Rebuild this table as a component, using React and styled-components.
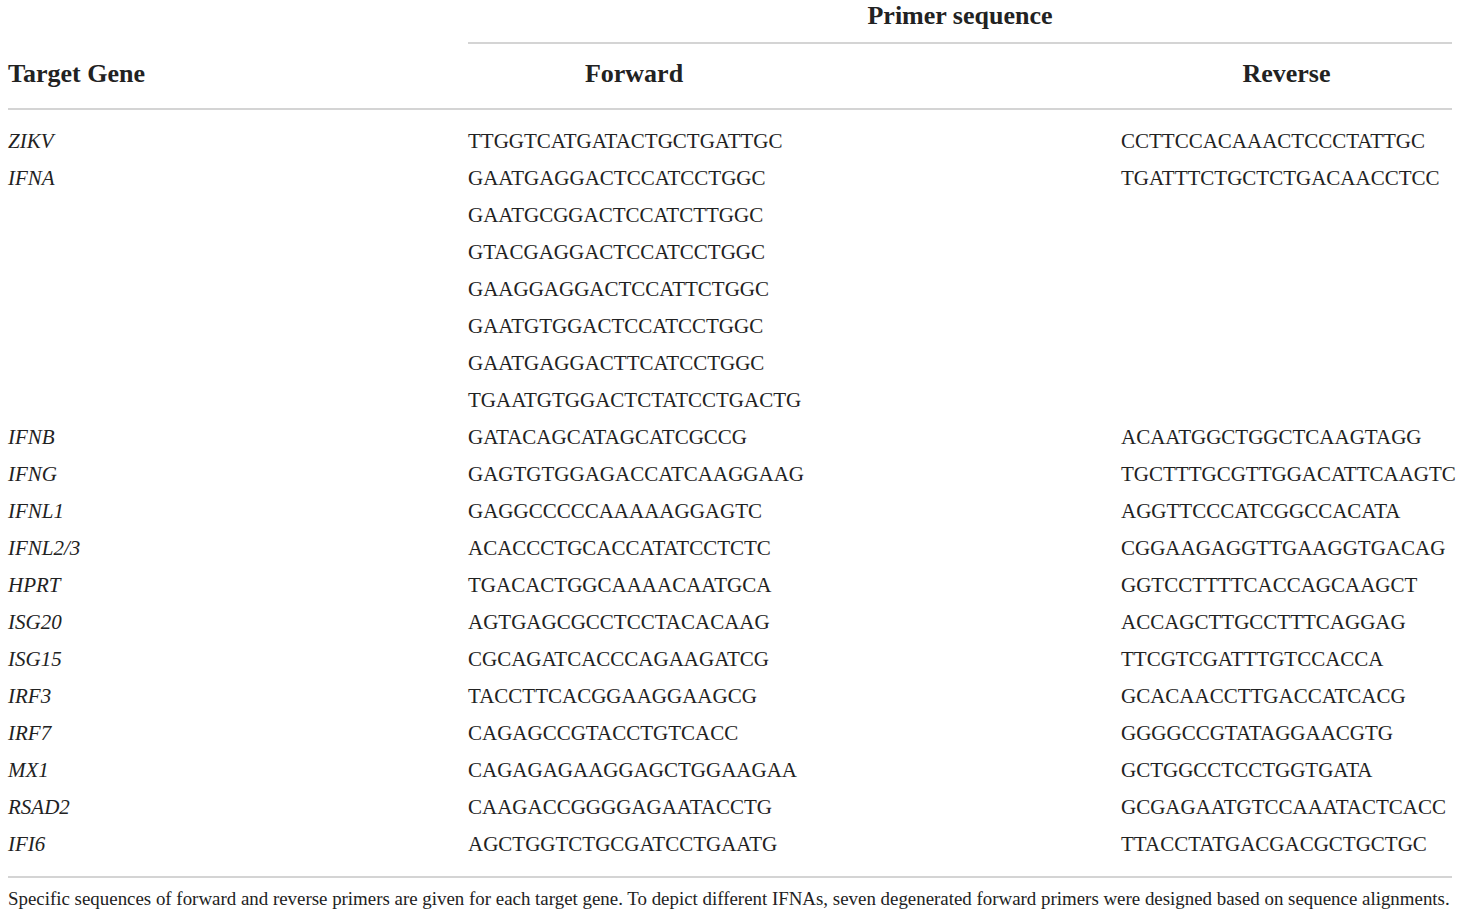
import React from "react";
import styled, { createGlobalStyle } from "styled-components";

const Global = createGlobalStyle`
  html, body { margin: 0; padding: 0; background: #fff; }
  body { font-family: "Liberation Serif", "DejaVu Serif", serif; color: #222; }
`;

const Page = styled.div`
  padding: 0 8px;
  width: 1444px;
`;

const Grid = styled.div`
  display: grid;
  grid-template-columns: 460px 332px 321px 331px;
`;

const SpanHead = styled.div`
  grid-column: 2 / 5;
  height: 44px;
  box-sizing: border-box;
  padding-bottom: 10px;
  border-bottom: 2px solid #d4d4d4;
  display: flex;
  align-items: center;
  justify-content: center;
  font-weight: bold;
  font-size: 26px;
`;

const HeadCell = styled.div`
  grid-column: ${(p) => p.$col};
  height: 64px;
  border-bottom: 2px solid #d4d4d4;
  display: flex;
  align-items: center;
  justify-content: ${(p) => (p.$center ? "center" : "flex-start")};
  font-weight: bold;
  font-size: 26px;
`;

const HeadText = styled.span`
  position: relative;
  top: -2px;
  margin-right: ${(p) => p.$shift || 0}px;
`;

const Gap = styled.div`
  height: 13px;
  grid-column: 1 / 5;
`;

const Cell = styled.div`
  grid-column: ${(p) => p.$col};
  height: 37px;
  display: flex;
  align-items: center;
  font-size: 21px;
  font-style: ${(p) => (p.$italic ? "italic" : "normal")};
  white-space: nowrap;
`;

const Foot = styled.div`
  border-top: 2px solid #d4d4d4;
  margin-top: 13px;
  padding-top: 10px;
  font-size: 18.9px;
  white-space: nowrap;
`;

const rows = [
  ["ZIKV", "TTGGTCATGATACTGCTGATTGC", "CCTTCCACAAACTCCCTATTGC"],
  ["IFNA", "GAATGAGGACTCCATCCTGGC", "TGATTTCTGCTCTGACAACCTCC"],
  ["", "GAATGCGGACTCCATCTTGGC", ""],
  ["", "GTACGAGGACTCCATCCTGGC", ""],
  ["", "GAAGGAGGACTCCATTCTGGC", ""],
  ["", "GAATGTGGACTCCATCCTGGC", ""],
  ["", "GAATGAGGACTTCATCCTGGC", ""],
  ["", "TGAATGTGGACTCTATCCTGACTG", ""],
  ["IFNB", "GATACAGCATAGCATCGCCG", "ACAATGGCTGGCTCAAGTAGG"],
  ["IFNG", "GAGTGTGGAGACCATCAAGGAAG", "TGCTTTGCGTTGGACATTCAAGTC"],
  ["IFNL1", "GAGGCCCCCAAAAAGGAGTC", "AGGTTCCCATCGGCCACATA"],
  ["IFNL2/3", "ACACCCTGCACCATATCCTCTC", "CGGAAGAGGTTGAAGGTGACAG"],
  ["HPRT", "TGACACTGGCAAAACAATGCA", "GGTCCTTTTCACCAGCAAGCT"],
  ["ISG20", "AGTGAGCGCCTCCTACACAAG", "ACCAGCTTGCCTTTCAGGAG"],
  ["ISG15", "CGCAGATCACCCAGAAGATCG", "TTCGTCGATTTGTCCACCA"],
  ["IRF3", "TACCTTCACGGAAGGAAGCG", "GCACAACCTTGACCATCACG"],
  ["IRF7", "CAGAGCCGTACCTGTCACC", "GGGGCCGTATAGGAACGTG"],
  ["MX1", "CAGAGAGAAGGAGCTGGAAGAA", "GCTGGCCTCCTGGTGATA"],
  ["RSAD2", "CAAGACCGGGGAGAATACCTG", "GCGAGAATGTCCAAATACTCACC"],
  ["IFI6", "AGCTGGTCTGCGATCCTGAATG", "TTACCTATGACGACGCTGCTGC"],
];

export default function App() {
  return (
    <Page>
      <Global />
      <Grid>
        <SpanHead>Primer sequence</SpanHead>
        <HeadCell $col="1">
          <HeadText>Target Gene</HeadText>
        </HeadCell>
        <HeadCell $col="2 / 4" $center>
          <HeadText $shift={321}>Forward</HeadText>
        </HeadCell>
        <HeadCell $col="4" $center>
          <HeadText>Reverse</HeadText>
        </HeadCell>
        <Gap />
        {rows.map((r, i) => (
          <React.Fragment key={i}>
            <Cell $col="1" $italic>{r[0]}</Cell>
            <Cell $col="2 / 4">{r[1]}</Cell>
            <Cell $col="4">{r[2]}</Cell>
          </React.Fragment>
        ))}
      </Grid>
      <Foot>
        Specific sequences of forward and reverse primers are given for each target gene. To depict different IFNAs, seven degenerated forward primers were designed based on sequence alignments.
      </Foot>
    </Page>
  );
}
